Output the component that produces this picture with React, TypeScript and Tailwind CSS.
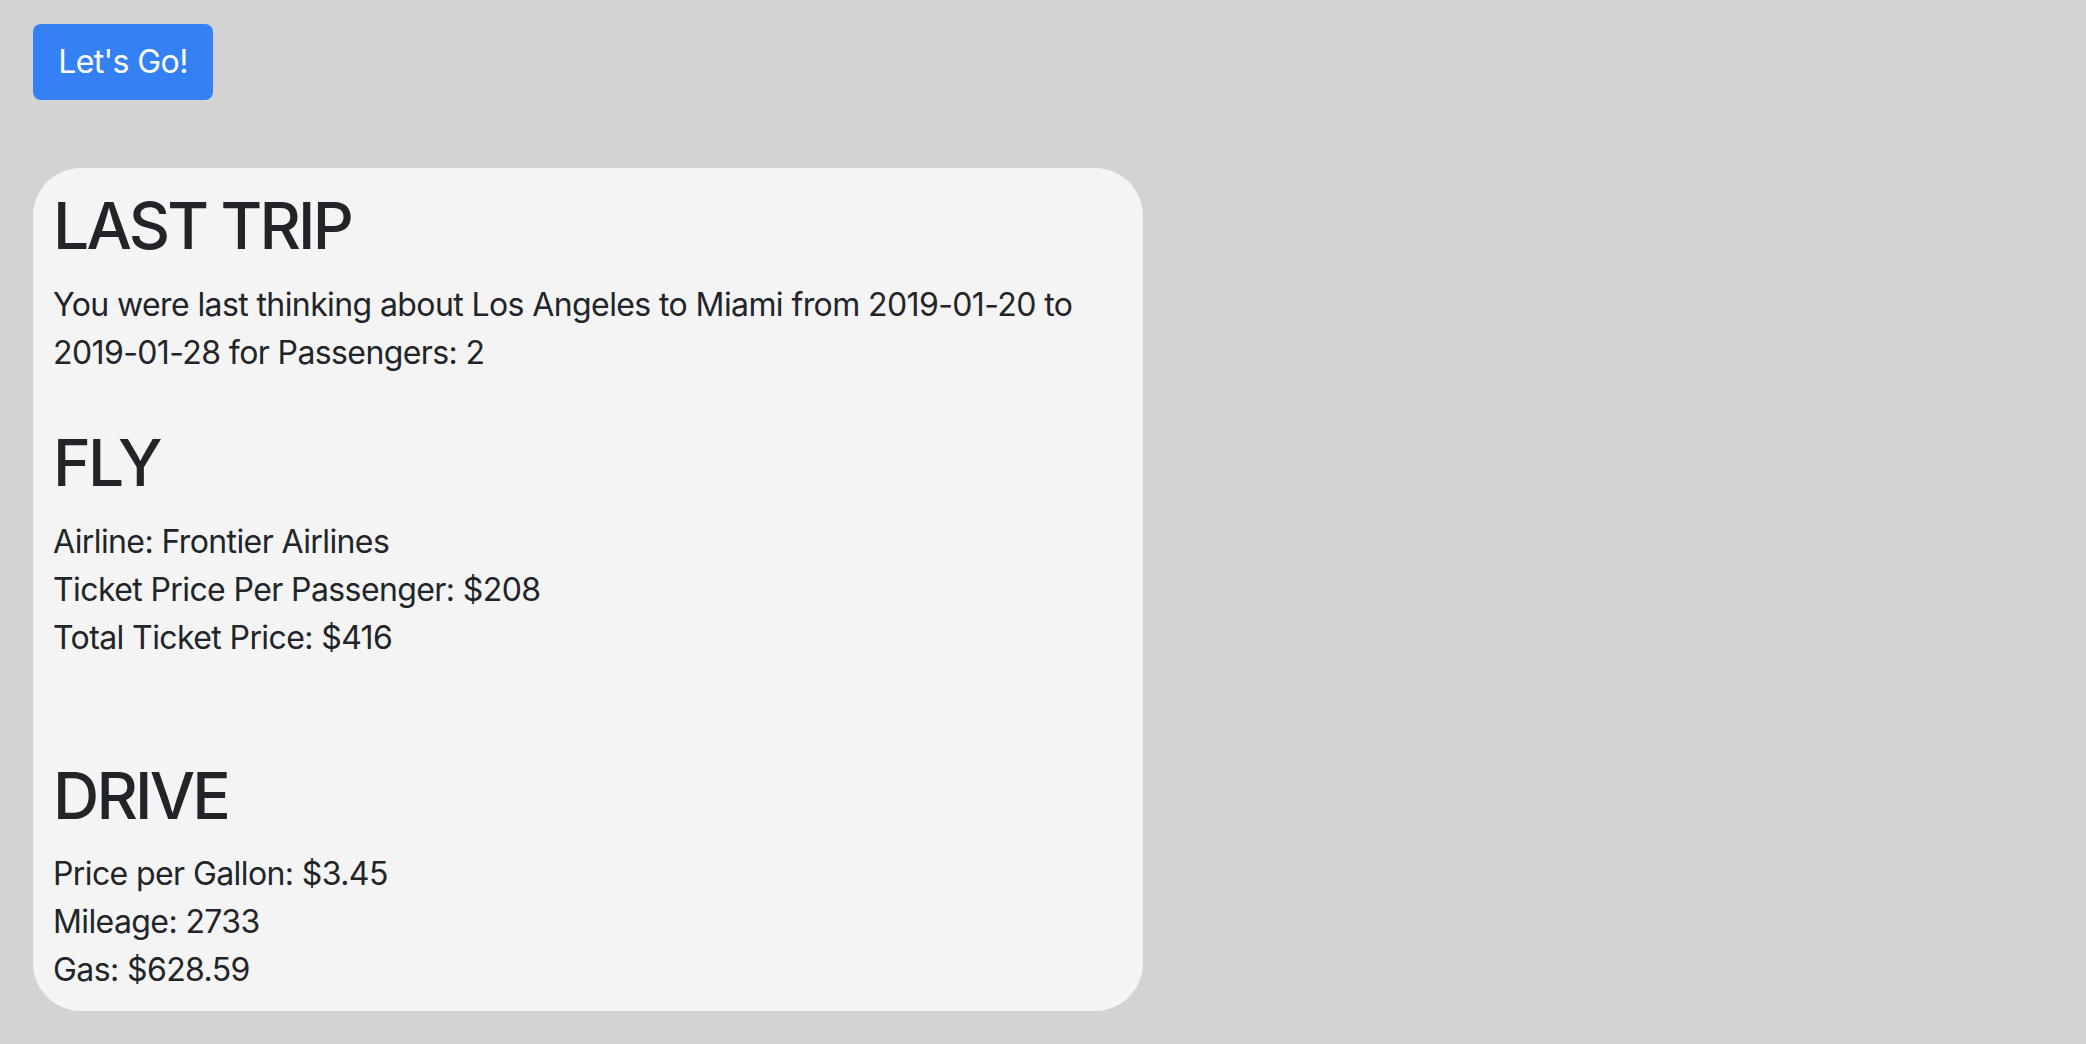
import React from "react";

export default function App() {
  const font = { fontFamily: "Inter, 'Noto Sans', sans-serif" };
  return (
    <div className="min-h-[1044px] w-full bg-[#d3d3d3] text-[#212529]" style={font}>
      <div className="pl-[33px] pt-[24px]">
        <button className="flex h-[76px] w-[180px] items-center justify-center rounded-[8px] bg-[#3481f6] text-[32px] leading-[48px] tracking-[-0.6px] text-white">
          Let&apos;s Go!
        </button>
        <div className="mt-[68px] w-[1110px] rounded-[48px] bg-[#f4f4f4] px-[20px] pt-[20px] pb-[17px] tracking-[-0.6px]">
          <h2 className="text-[64px] leading-[76.8px] font-medium tracking-[-2.8px] mb-[16px]">LAST TRIP</h2>
          <p className="text-[32px] leading-[48px]">
            You were last thinking about Los Angeles to Miami from 2019-01-20 to 2019-01-28 for Passengers: 2
          </p>
          <h2 className="mt-[48px] text-[64px] leading-[76.8px] font-medium tracking-[-2.8px] mb-[16px]">FLY</h2>
          <div className="text-[32px] leading-[48px]">
            <div>Airline: Frontier Airlines</div>
            <div>Ticket Price Per Passenger: $208</div>
            <div>Total Ticket Price: $416</div>
          </div>
          <h2 className="mt-[96px] text-[64px] leading-[76.8px] font-medium tracking-[-2.8px] mb-[16px]">DRIVE</h2>
          <div className="text-[32px] leading-[48px]">
            <div>Price per Gallon: $3.45</div>
            <div>Mileage: 2733</div>
            <div>Gas: $628.59</div>
          </div>
        </div>
      </div>
    </div>
  );
}
